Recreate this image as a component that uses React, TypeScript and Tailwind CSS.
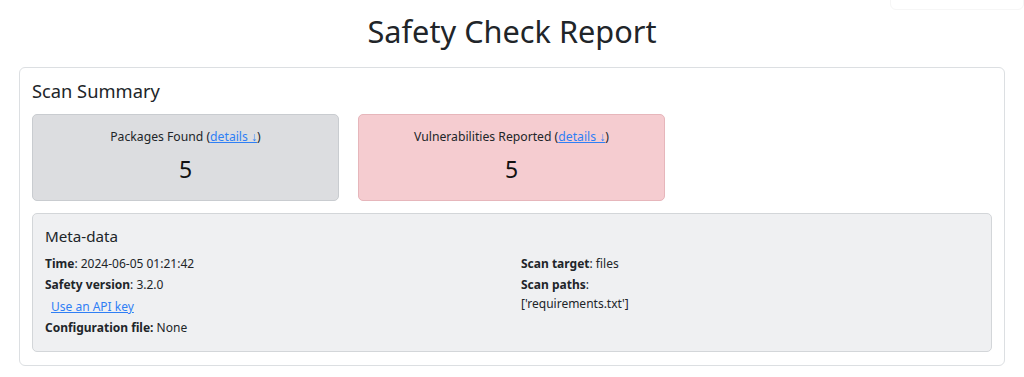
import React from "react";

const font = { fontFamily: '"Noto Sans", "Open Sans", sans-serif' };

function SummaryBox({ label, value, tone }: { label: string; value: number; tone: "gray" | "red" }) {
    const cls =
        tone === "gray"
            ? "bg-[#dcdde0] border-[#c9ccd0]"
            : "bg-[#f5ccd0] border-[#e6b6bb]";
    return (
        <div className={`w-[307px] h-[87px] rounded-[5px] border flex flex-col items-center pt-[12px] ${cls}`}>
            <div className="text-[12.2px] leading-[20px] text-[#212529]">
                {label} (<a href="#" className="text-[#2f7ff5] underline">details ↓</a>)
            </div>
            <div className="text-[23px] leading-[30px] mt-[7px] text-[#111]">{value}</div>
        </div>
    );
}

export default function App() {
    return (
        <div className="relative min-h-[377px] bg-white text-[#212529]" style={font}>
            <div className="absolute right-0 top-[-6px] w-[134px] h-[16px] rounded-[6px] border border-[#f6f6f6]" />
            <h1 className="text-center text-[30.7px] leading-[40px] pt-[11px] mb-[16px]">Safety Check Report</h1>
            <div className="mx-[19px] border border-[#dcdfe2] rounded-[6px] px-[12px] pt-[11px] pb-[13px]">
                <h5 className="text-[18.3px] leading-[24px] mb-[11px]">Scan Summary</h5>
                <div className="flex gap-[19px]">
                    <SummaryBox label="Packages Found" value={5} tone="gray" />
                    <SummaryBox label="Vulnerabilities Reported" value={5} tone="red" />
                </div>
                <div className="mt-[12px] bg-[#eff0f2] border border-[#d3d6d9] rounded-[5px] px-[12px] pt-[11px] pb-[13px]">
                    <h6 className="text-[15.2px] leading-[22px] mb-[6px]">Meta-data</h6>
                    <div className="flex text-[12px] leading-[21px]">
                        <div className="w-[476px]">
                            <div><b className="font-bold">Time</b>: 2024-06-05 01:21:42</div>
                            <div className="mb-px"><b className="font-bold">Safety version</b>: 3.2.0</div>
                            <div className="pl-[6px]"><a href="#" className="text-[#2f7ff5] underline">Use an API key</a></div>
                            <div><b className="font-bold">Configuration file:</b> None</div>
                        </div>
                        <div>
                            <div><b className="font-bold">Scan target</b>: files</div>
                            <div><b className="font-bold">Scan paths</b>:</div>
                            <div className="leading-[17px]">['requirements.txt']</div>
                        </div>
                    </div>
                </div>
            </div>
        </div>
    );
}
